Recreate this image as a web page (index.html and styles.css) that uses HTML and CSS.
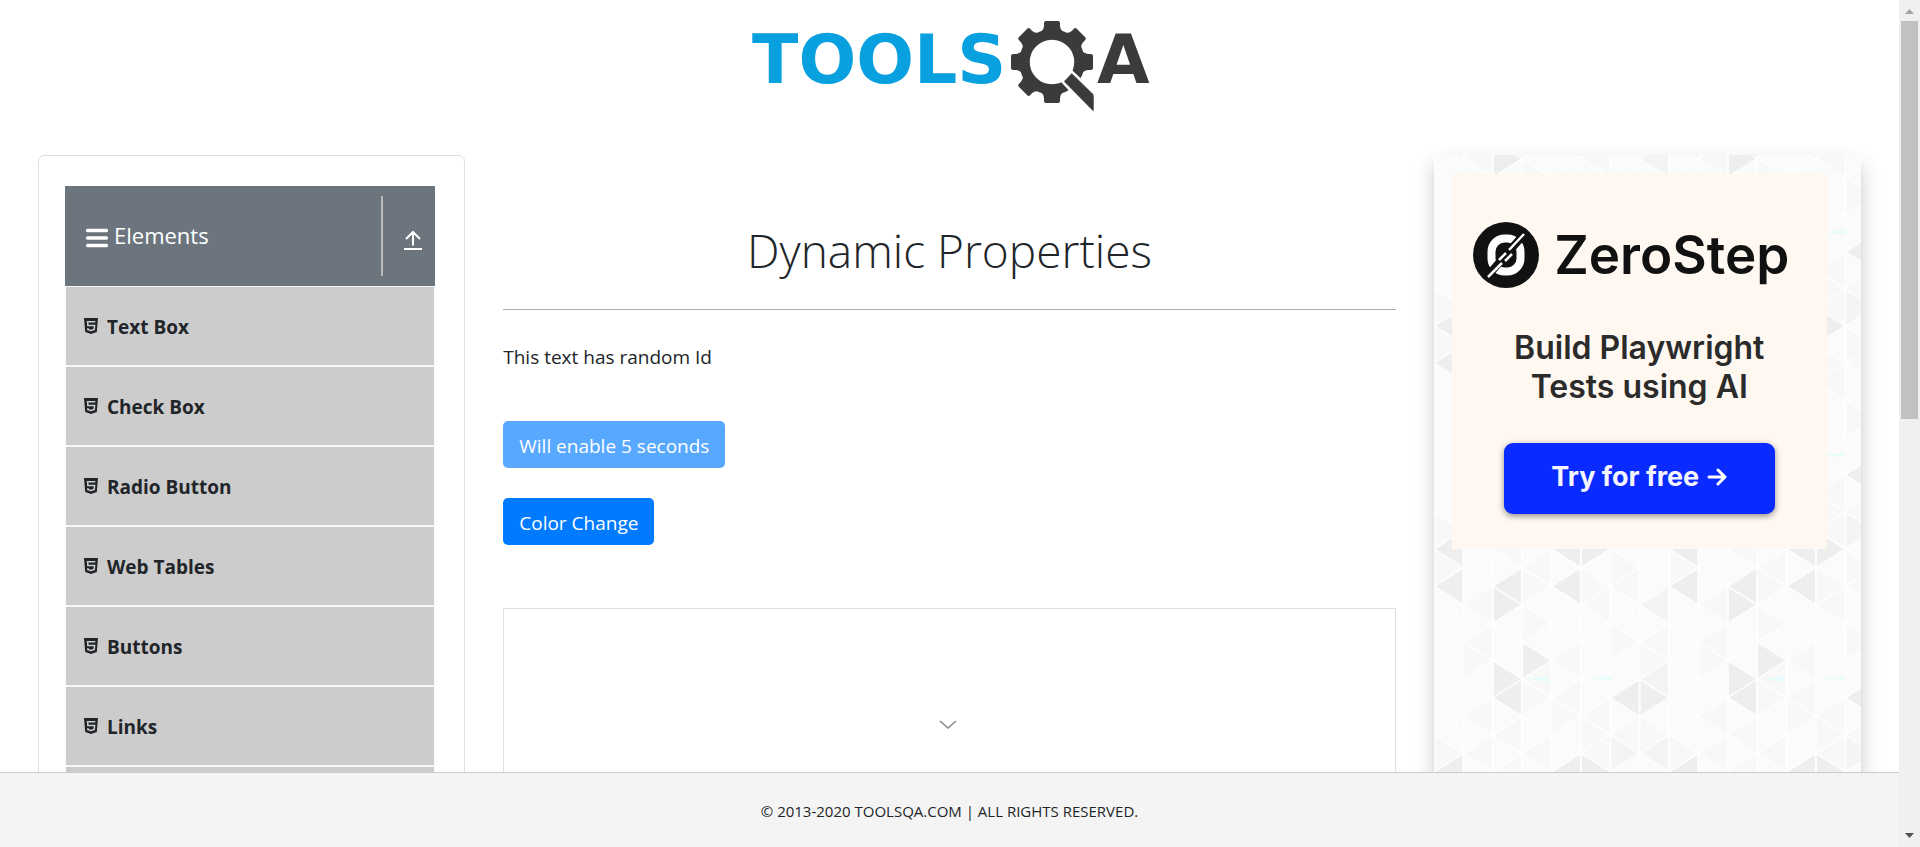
FILE: index.html
```html
<!DOCTYPE html>
<html lang="en">
<head>
<meta charset="utf-8">
<title>ToolsQA</title>
<link rel="stylesheet" href="styles.css">
</head>
<body>
<svg class="defs" aria-hidden="true">
  <symbol id="html5" viewBox="0 0 14 16">
    <path fill="#212529" d="M0 0h14l-1.200 14L7 16 1.200 14z"/>
    <path fill="none" stroke="#ccc" stroke-width="1.500" d="M11.300 3.700H3.600l.3 3.800h6.700l-.4 4L7 12.500l-3-.9-.1-1.600"/>
  </symbol>
</svg>
<div class="window">
  <div class="page">
    <div class="content">
      <header class="brand">
        <a href="#" aria-label="ToolsQA">
          <svg class="logo" viewBox="0 0 420 110">
            <text class="logo-tools" x="12" y="73">TOOLS</text>
            <g transform="translate(312 52)" fill="#3b3b3b">
              <circle r="27.500" fill="none" stroke="#3b3b3b" stroke-width="10.500"/>
              <g id="teeth">
                <path id="tooth" d="M-11-30q3-3 3-6v-3q0-2 2-2H6q2 0 2 2v3q0 3 3 6z"/>
                <use href="#tooth" transform="rotate(45)"/>
                <use href="#tooth" transform="rotate(90)"/>
                <use href="#tooth" transform="rotate(180)"/>
                <use href="#tooth" transform="rotate(225)"/>
                <use href="#tooth" transform="rotate(270)"/>
                <use href="#tooth" transform="rotate(315)"/>
              </g>
              <path d="M12 19.500l7.700-8.200L44 34v20z" stroke="#fff" stroke-width="5"/>
              <path d="M12 19.500l7.700-8.200L41.500 32.500v17z"/>
            </g>
            <text class="logo-a" x="357" y="73">A</text>
          </svg>
        </a>
      </header>
      <main class="columns">
        <nav class="column">
          <div class="sidebar">
            <button class="group" type="button">
              <span class="group-title">
                <svg class="menu-icon" viewBox="0 0 22 20" stroke="#fff" stroke-width="3.500" stroke-linecap="round"><path d="M1.700 2.500h18.600M1.700 10h18.600M1.700 17.500h18.600"/></svg>
                Elements
              </span>
              <span class="group-toggle">
                <svg class="up-icon" viewBox="0 0 18 20" fill="none" stroke="#fff" stroke-width="2"><path d="M9 15.500V2M2 9l7-7 7 7M0 19h18"/></svg>
              </span>
            </button>
            <ul class="menu">
              <li><a href="#"><svg class="item-icon"><use href="#html5"/></svg>Text Box</a></li>
              <li><a href="#"><svg class="item-icon"><use href="#html5"/></svg>Check Box</a></li>
              <li><a href="#"><svg class="item-icon"><use href="#html5"/></svg>Radio Button</a></li>
              <li><a href="#"><svg class="item-icon"><use href="#html5"/></svg>Web Tables</a></li>
              <li><a href="#"><svg class="item-icon"><use href="#html5"/></svg>Buttons</a></li>
              <li><a href="#"><svg class="item-icon"><use href="#html5"/></svg>Links</a></li>
              <li></li>
            </ul>
          </div>
        </nav>
        <section class="column">
          <h1>Dynamic Properties</h1>
          <p class="note">This text has random Id</p>
          <div class="actions">
            <button class="btn" type="button" disabled>Will enable 5 seconds</button>
            <button class="btn" type="button">Color Change</button>
          </div>
          <div class="frame">
            <svg class="chevron" viewBox="0 0 18 10" fill="none" stroke="#888" stroke-width="1.500"><path d="M1 1l8 7 8-7"/></svg>
          </div>
        </section>
        <aside class="column">
          <div class="promo">
            <svg class="tiles" aria-hidden="true">
              <pattern id="tri" width="235" height="223" y="-52" patternUnits="userSpaceOnUse" viewBox="0 0 8 12" preserveAspectRatio="none">
                <path fill="#fbfbfb" d="M0 0h8v12H0z"/>
                <path fill="#f8f8f8" d="M2 2v2l-1-1zM2 4v2l-1-1zM8 4v2l-1-1zM6 4v2l1-1zM4 0v2l-1-1zM6 2v2l-1-1zM3 3v2l1-1zM3 1v2l1-1zM1 5v2l1-1zM2 8v2l-1-1zM4 6v2l-1-1zM5 5v2l-1-1zM5 7v2l-1-1zM3 7v2l1-1zM3 9v2l-1-1zM6 8v2l-1-1zM7 9v2l-1-1zM6 10v2l-1-1zM4 10v2l-1-1zM7 9v2l1-1zM0 10v2l1-1zM2 10v2l-1-1zM5 9v2l1-1zM3 11v2l-1-1zM3-1v2l-1-1zM7 1v2l-1-1zM5 1v2l1-1zM7 5v2l1-1zM0 0v2l1-1zM6 0v2l1-1zM4 8v2l1-1z"/>
                <path fill="#f4f4f4" d="M8 2v2l-1-1zM6 10v2l1-1zM8 10v2l-1-1zM8 6v2l-1-1z"/>
                <path fill="#eee" d="M1 1v2l-1-1zM3 1v2l-1-1zM5 1v2l-1-1zM2 2v2l1-1zM3 5v2l1-1zM2 6v2l1-1zM3 7v2l-1-1zM7 7v2l-1-1zM7 7v2l1-1zM1 11v2l-1-1zM1-1v2l-1-1zM5 11v2l-1-1zM5-1v2l-1-1zM5 11v2l1-1zM5-1v2l1-1z"/>
                <path fill="none" stroke="#fefefe" stroke-width=".07" d="M0 0v12M1 0v12M2 0v12M3 0v12M4 0v12M5 0v12M6 0v12M7 0v12M8 0v12M0-8l8 8M0-6l8 8M0-4l8 8M0-2l8 8M0 0l8 8M0 2l8 8M0 4l8 8M0 6l8 8M0 8l8 8M0 10l8 8M0 2l8-8M0 4l8-8M0 6l8-8M0 8l8-8M0 10l8-8M0 12l8-8M0 14l8-8M0 16l8-8M0 18l8-8M0 20l8-8"/>
                <path fill="#e6fdfc" d="M3.200 7l.7-.15v.3zM5.200 6.950l.8-.1v.2z"/>
              </pattern>
              <rect width="100%" height="100%" fill="url(#tri)"/>
            </svg>
            <a class="ad" href="#">
              <span class="ad-brand">
                <svg class="ad-mark" viewBox="0 0 66 66">
                  <circle cx="33" cy="33" r="33" fill="#111"/>
                  <rect x="18.500" y="16.500" width="29" height="33" rx="13" fill="none" stroke="#fff" stroke-width="8"/>
                  <path stroke="#111" stroke-width="8" d="M12 57l40-46"/>
                  <path stroke="#fff" stroke-width="2.500" d="M15 55l14-14M36 28l15-16M26 38l7-7M32 39l7-7"/>
                </svg>
                ZeroStep
              </span>
              <span class="ad-text">Build Playwright<br>Tests using AI</span>
              <span class="ad-cta">Try for free
                <svg class="ad-arrow" viewBox="0 0 20 18" fill="none" stroke="#fff" stroke-width="3" stroke-linecap="round" stroke-linejoin="round"><path d="M2 9h16M11 2l7 7-7 7"/></svg>
              </span>
            </a>
          </div>
        </aside>
      </main>
    </div>
    <footer>© 2013-2020 TOOLSQA.COM | ALL RIGHTS RESERVED.</footer>
  </div>
  <div class="scrollbar" aria-hidden="true">
    <svg class="scroll-arrow" viewBox="0 0 9 5" fill="#a3a3a3"><path d="M0 5l4.500-5L9 5z"/></svg>
    <div class="scroll-track"><div class="scroll-thumb"></div></div>
    <svg class="scroll-arrow" viewBox="0 0 9 5" fill="#505050"><path d="M0 0l4.500 5L9 0z"/></svg>
  </div>
</div>
</body>
</html>
```
FILE: styles.css
```css
* { box-sizing: border-box; }
body {
  margin: 0;
  color: #212529;
  background: #fff;
  font: 19px/30px "Open Sans", "Noto Sans", sans-serif;
}
a { color: inherit; text-decoration: none; }
button { font: inherit; border: 0; cursor: pointer; }
svg { display: block; flex: none; }
.defs { position: absolute; width: 0; height: 0; }

.window { display: flex; height: 100vh; }
.page { flex: 1; min-width: 0; display: flex; flex-direction: column; }
.content { flex: 1; min-height: 0; overflow: hidden; display: flex; flex-direction: column; }

.brand { display: flex; justify-content: center; padding: 10px 0 35px; }
.logo { width: 420px; height: 110px; }
.logo text { font-family: "DejaVu Sans", sans-serif; font-size: 68px; font-weight: 700; }
.logo-tools { fill: #08a0df; }
.logo-a { fill: #3b3b3b; }

.columns {
  flex: 1;
  min-height: 0;
  display: grid;
  grid-template-columns: 1fr 2fr 1fr;
  padding: 0 19px;
}
.column { min-width: 0; padding: 0 19px; display: flex; flex-direction: column; }

.sidebar { border: 1px solid #dfdfdf; border-radius: 6px; padding: 30px 29px 30px 26px; }
.group {
  width: 100%;
  display: flex;
  justify-content: space-between;
  padding: 10px 13px 10px 21px;
  color: #fff;
  background: #6c757d;
  font-size: 22px;
}
.group-title { display: flex; align-items: center; gap: 6px; height: 78px; }
.menu-icon { width: 22px; height: 20px; margin-top: 6px; }
.group-toggle {
  display: flex;
  align-items: center;
  height: 80px;
  padding: 8px 0 0 21px;
  border-left: 2px solid #bbb;
}
.up-icon { width: 18px; height: 20px; }
.menu { list-style: none; margin: 0; padding: 0; font-weight: 700; }
.menu li { height: 80px; background: #ccc; border: 1px solid #f8f8f8; }
.menu a { display: flex; align-items: center; gap: 9px; height: 100%; padding: 2px 0 0 18px; }
.item-icon { width: 14px; height: 16px; margin-bottom: 2px; }

h1 {
  margin: 60px 0 30px;
  padding-bottom: 24px;
  border-bottom: 1px solid #acacac;
  font-size: 46px;
  line-height: 70px;
  font-weight: 300;
  text-align: center;
}
.note { margin: 2px 0 49px; }
.actions { display: flex; flex-direction: column; align-items: flex-start; gap: 30px; margin-bottom: 63px; }
.btn {
  padding: 10px 16px 7px;
  border-radius: 5px;
  color: #fff;
  background: #007bff;
}
.btn:disabled { opacity: .65; }
.frame { flex: 1; border: 1px solid #e0e0e0; border-bottom: 0; display: flex; justify-content: center; padding: 111px 4px 0 0; }
.chevron { width: 18px; height: 10px; }

.promo {
  flex: 1;
  position: relative;
  padding: 19px 18px;
  box-shadow: 0 10px 20px rgba(0, 0, 0, .19), 0 6px 6px rgba(0, 0, 0, .04);
}
.tiles { position: absolute; inset: 0; width: 100%; height: 100%; }
.ad {
  position: relative;
  width: 375px;
  max-width: 100%;
  height: 375px;
  display: flex;
  flex-direction: column;
  align-items: center;
  padding-top: 48px;
  background: #fef8f1;
  color: #2b2b2b;
  font-family: Inter, sans-serif;
}
.ad-brand { display: flex; align-items: center; gap: 15px; margin-right: 16px; color: #111; font-size: 53px; line-height: 66px; font-weight: 600; }
.ad-mark { width: 66px; height: 66px; }
.ad-text { margin-top: 40px; font-size: 32px; line-height: 39px; font-weight: 600; text-align: center; }
.ad-cta {
  display: flex;
  align-items: center;
  justify-content: center;
  gap: 8px;
  width: 271px;
  height: 71px;
  margin-top: 37px;
  padding-bottom: 4px;
  border-radius: 9px;
  color: #f4f4ff;
  background: #0a2bff;
  box-shadow: 0 2px 6px rgba(0, 0, 0, .45);
  font-size: 27px;
  font-weight: 700;
}
.ad-arrow { width: 20px; height: 18px; }

footer {
  padding: 23px 0 21px;
  border-top: 1px solid #ccc;
  background: #f4f4f4;
  font-size: 15px;
  text-align: center;
}

.scrollbar { width: 21px; background: #f0f0f0; display: flex; flex-direction: column; align-items: center; padding: 9px 0; }
.scroll-arrow { width: 9px; height: 5px; }
.scroll-track { flex: 1; align-self: stretch; padding: 7px 2px; }
.scroll-thumb { height: 49.5%; background: #c1c1c1; }
```
